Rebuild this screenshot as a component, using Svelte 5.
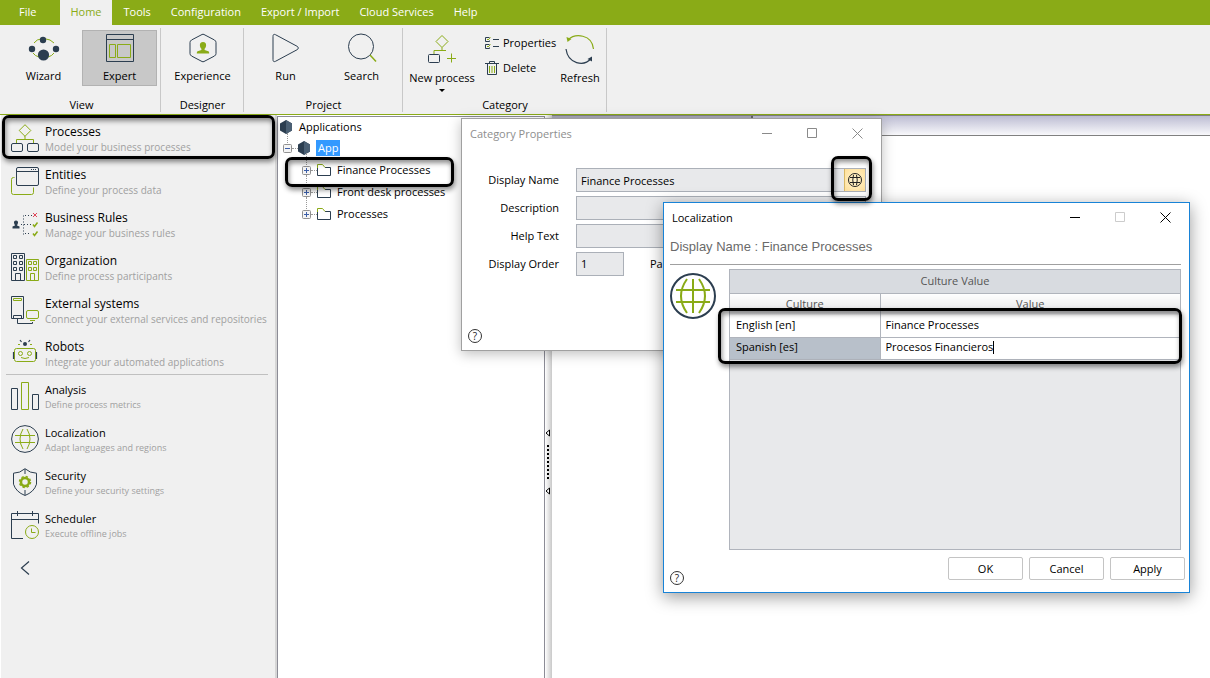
<script>
  const N = '#2c3e50';
  const G = '#8aab17';

  const tabs = ['File', 'Home', 'Tools', 'Configuration', 'Export / Import', 'Cloud Services', 'Help'];

  const icons = {
    wizard: `<g fill="none" stroke="${G}"><path d="M6 11q3-4 7-4M18 7q4 0 8 4M5 21q2 3 6 4M26 21q-2 3-6 4"/></g><g fill="${N}"><circle cx="15" cy="8" r="3.200"/><circle cx="4" cy="17" r="3.200"/><circle cx="28" cy="17" r="3.200"/><circle cx="15.500" cy="23" r="5.600"/></g>`,
    expert: `<g fill="none"><path stroke="${N}" d="M2.500 2.500h27v27h-27zM2.500 7.500h27"/><path stroke="${G}" d="M5.500 12.500h6v13h-6zM13.500 12.500h13v13h-13z"/></g>`,
    experience: `<path fill="none" stroke="${N}" d="M15 2.500q1-.6 2 0l10.500 5.500q1.500 1 1.500 2.500v11q0 1.500-1.500 2.500L17 29.500q-1 .6-2 0L4.500 24Q3 23 3 21.500v-11Q3 9 4.500 8z"/><path fill="${G}" d="M16 10c2.200 0 3.300 1.500 3.100 3.400-.1 1.500-.8 2.700-1.500 3.400v1.300l3.700 1.200c.7.300.9 1 .9 2.200H9.800c0-1.200.2-1.900.9-2.200l3.700-1.200v-1.300c-.7-.7-1.400-1.900-1.500-3.400C12.700 11.500 13.800 10 16 10z"/>`,
    run: `<path fill="none" stroke="${N}" d="M3 4.500q0-3 2.500-1.800L27.500 14.500q1.800 1.500 0 3L5.500 29.300Q3 30.500 3 27.500z"/>`,
    search: `<g fill="none"><circle cx="15" cy="14.500" r="12.500" stroke="${N}"/><path stroke="${G}" stroke-width="1.500" d="M24 23l6 6.500"/></g>`,
    newprocess: `<g fill="none"><path stroke="${G}" d="M16 1.500l6 6-6 6-6-6zM16 13.500v3.500M8 21v-4.500h12M25.500 19.500v9M21 24.500h9"/><rect x="2.500" y="20.500" width="11" height="8" rx="1" stroke="${N}"/></g>`,
    refresh: `<g fill="none" stroke-width="1.200"><path stroke="${G}" d="M4 6C11-1 28 0 29.500 15"/><path stroke="${N}" d="M2 15C4 30 20 33 27 24.500"/></g><path fill="${G}" d="M2.500 3l1 5 4-3z"/><path fill="${N}" d="M28 27.500v-5l-4.500 2.500z"/>`,
    processes: `<g fill="none"><path stroke="${G}" d="M14 .7l5.800 5.800L14 12.300 8.200 6.500zM14 12v3.500M5.500 19.500v-4h17v4"/><g stroke="${N}"><rect x=".5" y="19.500" width="11" height="8" rx="1.500"/><rect x="16.500" y="19.500" width="11" height="8" rx="1.500"/></g></g>`,
    entities: `<g fill="none"><path stroke="${G}" d="M3.500 10.500h-1q-2 0-2 2v13q0 2 2 2h18q2 0 2-2v-5"/><g stroke="${N}"><rect x="5.500" y=".5" width="22" height="18" rx="1.500"/><path d="M5.500 4.500h22"/><path stroke-dasharray="1 1" d="M20 2.500h6"/></g></g>`,
    rules: `<path fill="${N}" d="M5 10.500q2.300 0 2 2.500l-1 2.500 2.500 1v2H1.500v-2l2.500-1L3 13q-.3-2.500 2-2.500z"/><g fill="none"><path stroke="${N}" stroke-dasharray="1 2" d="M10 14.500h11M12.500 5.500v19M14 5.500h7M14 23.500h6"/><path stroke="#e0485a" d="M22 3l4 4M26 3l-4 4"/><path stroke="${G}" stroke-width="1.500" d="M22 14.500l1.500 2 3-4M22 23.500l1.500 2 3-4"/></g>`,
    organization: `<g fill="none" stroke="${N}"><path d="M.5.500h13v27H.5zM2.500 2.500h3v3h-3zM8.500 2.500h3v3h-3zM2.500 8.500h3v3h-3zM8.500 8.500h3v3h-3zM2.500 14.500h3v3h-3zM8.500 14.500h3v3h-3zM4.500 27v-6.500h5V27"/><path stroke="${G}" d="M15.500 6.500h12v21h-12zM17.500 8.500h3v3h-3zM22.500 8.500h3v3h-3zM17.500 14.500h3v3h-3zM22.500 14.500h3v3h-3zM19.500 27v-6.500h4V27"/></g>`,
    external: `<g fill="none" stroke="${N}"><path d="M.5.500h12v22H.5zM2.500 22v-2.500h8V22M6.500 23v4.500h15V26"/><path stroke="${G}" d="M2.500 2.500h8v2h-8z"/><rect x="15.500" y="14.500" width="12" height="8" rx="1.500" stroke="${G}"/><path stroke="${G}" d="M19 24.500h5"/></g>`,
    robots: `<g fill="none" stroke="${G}"><rect x="3.500" y="9.500" width="21" height="13" rx="2"/><circle cx="9.500" cy="14.500" r="2"/><circle cx="18.500" cy="14.500" r="2"/><path d="M10 18.500q4 2 8 0M9 5.500H7M19 5.500h2"/><path stroke="${N}" stroke-width="1.200" d="M2.500 13v7M25.500 13v7M9 1l1.500 2M19 1l-1.500 2"/></g><circle cx="14" cy="5" r="2" fill="${N}"/>`,
    analysis: `<g fill="none"><path stroke="${N}" d="M.5 6.500h6v21h-6zM21.500 12.500h6v15h-6z"/><path stroke="${G}" d="M10.500.500h7v27h-7z"/></g>`,
    localization: `<g fill="none"><circle cx="14" cy="14" r="13.400" stroke="${N}"/><path stroke="${G}" d="M4 10.500h20M4 17.500h20M12 4q-6 10 0 20M16 4q6 10 0 20"/></g>`,
    security: `<g fill="none"><path stroke="${N}" d="M14 .7q5 4.500 11.500 4.500v11Q23 24 14 27.500 5 24 2.500 16.200v-11Q9 5.200 14 .7zM14 1v5M14 22v5"/><circle cx="14" cy="14" r="4" stroke="${G}" stroke-width="2.500"/><circle cx="14" cy="14" r="5.500" stroke="${G}" stroke-width="1.500" stroke-dasharray="2.320 2"/></g>`,
    scheduler: `<g fill="none"><path stroke="${N}" d="M12 27.500H.5v-25h27v10M.5 8.500h27M6.500 0v5M21.500 0v5"/><circle cx="21" cy="21" r="6.500" stroke="${G}"/><path stroke="${G}" d="M20.500 17.500v4h4"/></g>`
  };

  const mainItems = [
    ['processes', 'Processes', 'Model your business processes'],
    ['entities', 'Entities', 'Define your process data'],
    ['rules', 'Business Rules', 'Manage your business rules'],
    ['organization', 'Organization', 'Define process participants'],
    ['external', 'External systems', 'Connect your external services and repositories'],
    ['robots', 'Robots', 'Integrate your automated applications']
  ];
  const extraItems = [
    ['analysis', 'Analysis', 'Define process metrics'],
    ['localization', 'Localization', 'Adapt languages and regions'],
    ['security', 'Security', 'Define your security settings'],
    ['scheduler', 'Scheduler', 'Execute offline jobs']
  ];
  const categories = ['Finance Processes', 'Front desk processes', 'Processes'];

  let displayName = $state('Finance Processes');
  let description = $state('');
  let helpText = $state('');
  let order = $state('1');
  let spanish = $state('Procesos Financieros');
</script>

{#snippet big(icon, label)}
  <svg width="32" height="32" viewBox="0 0 32 32" aria-hidden="true">{@html icons[icon]}</svg>
  <span>{label}</span>
{/snippet}

{#snippet entry(item)}
  <svg width="28" height="28" viewBox="0 0 28 28" aria-hidden="true">{@html icons[item[0]]}</svg>
  <span class="words"><span class="name">{item[1]}</span><span class="hint">{item[2]}</span></span>
{/snippet}

{#snippet hexagon()}
  <svg width="12" height="14" viewBox="0 0 12 14" aria-hidden="true">
    <path fill="#2c3e50" d="M6 0l6 3.500v7L6 14 0 10.500v-7z" /><path fill="#4a5f73" d="M6 0l6 3.500v7L6 14z" />
  </svg>
{/snippet}

{#snippet expander(open)}
  <svg width="9" height="9" viewBox="0 0 9 9" aria-hidden="true">
    <rect x=".5" y=".5" width="8" height="8" rx="1" fill="#f4f4f4" stroke="#919191" />
    <path stroke="#3b5ea8" d={open ? 'M2 4.500h5' : 'M2 4.500h5M4.500 2v5'} />
  </svg>
{/snippet}

{#snippet controls(dim)}
  <div class="controls">
    <button aria-label="Minimize"><svg width="11" height="11"><path stroke={dim ? '#8a8a8a' : '#000'} d="M0 5.500h10" /></svg></button>
    <button aria-label="Maximize"><svg width="11" height="11"><path fill="none" stroke={dim ? '#8a8a8a' : '#ccc'} d="M.5.500h9v9h-9z" /></svg></button>
    <button aria-label="Close"><svg width="11" height="11"><path stroke={dim ? '#8a8a8a' : '#000'} d="M.5.500l10 10M10.500.500l-10 10" /></svg></button>
  </div>
{/snippet}

{#snippet help()}
  <button class="help" aria-label="Help">?</button>
{/snippet}

<div class="app">
  <nav class="tabs">
    {#each tabs as tab}
      <button class:active={tab === 'Home'} class:file={tab === 'File'}>{tab}</button>
    {/each}
  </nav>

  <div class="ribbon">
    <section class="group view">
      <div class="tools">
        <button class="tool">{@render big('wizard', 'Wizard')}</button>
        <button class="tool on">{@render big('expert', 'Expert')}</button>
      </div>
      <h2>View</h2>
    </section>
    <section class="group">
      <div class="tools"><button class="tool">{@render big('experience', 'Experience')}</button></div>
      <h2>Designer</h2>
    </section>
    <section class="group">
      <div class="tools">
        <button class="tool">{@render big('run', 'Run')}</button>
        <button class="tool">{@render big('search', 'Search')}</button>
      </div>
      <h2>Project</h2>
    </section>
    <section class="group category">
      <div class="tools">
        <button class="tool low new">{@render big('newprocess', 'New process')}<i class="caret-down"></i></button>
        <div class="stack">
          <button>
            <svg width="14" height="12" viewBox="0 0 14 12" aria-hidden="true">
              <path fill="none" stroke="#2c3e50" d="M4.500.500h-4v4h4v-1M4.500 7.500h-4v4h4v-1M8 2.500h6M8 9.500h6" />
              <path fill="none" stroke="#8aab17" d="M2 2l1 1 2.500-2.500M2 9l1 1 2.500-2.500" />
            </svg>
            Properties
          </button>
          <button>
            <svg width="14" height="14" viewBox="0 0 14 14" aria-hidden="true">
              <path fill="none" stroke="#2c3e50" d="M0 2.500h14M4.500 2V.500h5V2M2.500 3v10.500h9V3" />
              <path stroke="#8aab17" d="M4.500 5v7M7 5v7M9.500 5v7" />
            </svg>
            Delete
          </button>
        </div>
        <button class="tool low slim">{@render big('refresh', 'Refresh')}</button>
      </div>
      <h2>Category</h2>
    </section>
  </div>

  <div class="body">
    <aside class="side">
      <ul class="main">
        {#each mainItems as item, i}
          <li class:marked={i === 0}><button>{@render entry(item)}</button></li>
        {/each}
      </ul>
      <hr />
      <ul class="extra">
        {#each extraItems as item}
          <li><button>{@render entry(item)}</button></li>
        {/each}
      </ul>
      <button class="back" aria-label="Collapse">
        <svg width="10" height="14" viewBox="0 0 10 14"><path fill="none" stroke="#2c3e50" stroke-width="1.200" d="M9 .5L1.500 7 9 13.500" /></svg>
      </button>
    </aside>

    <section class="tree">
      <div class="node root">{@render hexagon()}<span>Applications</span></div>
      <div class="node app-node">{@render expander(true)}<i class="dots"></i>{@render hexagon()}<span class="picked">App</span></div>
      <ul>
        {#each categories as category, i}
          <li class="node" class:marked={i === 0}>
            {@render expander(false)}<i class="dots"></i>
            <svg width="14" height="12" viewBox="0 0 14 12" aria-hidden="true">
              <path fill="none" stroke="#2c3e50" d="M.5 4v7.500h13v-8H8" />
              <path fill="none" stroke="#8aab17" d="M.5 4V.500h5L8 3.500" />
            </svg>
            <span>{category}</span>
          </li>
        {/each}
      </ul>
    </section>

    <div class="splitter">
      <svg width="6" height="8"><path d="M4.500 1v6L1 4z" fill="#fff" stroke="#000" /></svg>
      <i></i>
      <svg width="6" height="8"><path d="M4.500 1v6L1 4z" fill="#fff" stroke="#000" /></svg>
    </div>

    <main class="canvas"><div class="strip"><i></i></div></main>
  </div>

  <section class="window props">
    <header><h1>Category Properties</h1>{@render controls(true)}</header>
    <form>
      <label for="dn">Display Name</label>
      <div class="combo">
        <input id="dn" bind:value={displayName} />
        <button type="button" class="globe marked" aria-label="Localize">
          <svg width="16" height="16" viewBox="0 0 16 16">
            <g fill="none" stroke="#222"><circle cx="8" cy="8" r="6.500" /><path d="M3 5.500h10M3 10.500h10M6.500 3Q5 8 6.500 13M9.500 3q1.500 5 0 10" /></g>
          </svg>
        </button>
      </div>
      <label for="ds">Description</label>
      <input id="ds" bind:value={description} />
      <label for="ht">Help Text</label>
      <input id="ht" bind:value={helpText} />
      <label for="or">Display Order</label>
      <div class="pair"><input id="or" bind:value={order} /><span>Pa</span></div>
    </form>
    {@render help()}
  </section>

  <section class="window local">
    <header><h1>Localization</h1>{@render controls(false)}</header>
    <h2>Display Name : Finance Processes</h2>
    <div class="content">
      <svg width="48" height="48" viewBox="0 0 48 48" aria-hidden="true">
        <circle cx="24" cy="24" r="22" fill="none" stroke="#2c3e50" stroke-width="2" />
        <path fill="none" stroke="#8aab17" stroke-width="2" d="M7 18h34M7 30h34M24 7v34M18 7Q6 24 18 41M30 7q12 17 0 34" />
      </svg>
      <div class="grid">
        <table>
          <colgroup><col class="culture" /><col /></colgroup>
          <thead>
            <tr class="band"><th colspan="2">Culture Value</th></tr>
            <tr class="cols"><th>Culture</th><th>Value</th></tr>
          </thead>
          <tbody>
            <tr><td>English [en]</td><td>Finance Processes</td></tr>
            <tr><td class="sel">Spanish [es]</td><td><span class="edit"><input aria-label="Spanish value" bind:value={spanish} /><i></i></span></td></tr>
          </tbody>
        </table>
        <div class="mark"></div>
      </div>
    </div>
    <footer>
      {@render help()}
      <div class="actions"><button>OK</button><button>Cancel</button><button>Apply</button></div>
    </footer>
  </section>
</div>

<style>
  :global(body) { margin: 0; background: #fff; }
  * { box-sizing: border-box; }
  .app {
    position: relative; min-height: 100vh; display: flex; flex-direction: column; overflow: hidden;
    font: 11px/16px "Open Sans", "Noto Sans", sans-serif; color: #000;
  }
  button { font: inherit; color: inherit; border: 0; background: none; padding: 0; }
  h1, h2, ul, hr { margin: 0; padding: 0; font: inherit; list-style: none; }
  svg { display: block; flex: none; }

  .tabs { display: flex; height: 25px; background: #8aab17; }
  .tabs button { color: #fff; padding: 0 10px 2px; white-space: nowrap; }
  .tabs .file { padding: 0 24px 2px 19px; }
  .tabs .active { background: #f0f0f0; color: #8aab17; margin-right: 2px; }

  .ribbon { display: flex; height: 90px; padding: 3px 0 2px; background: #f0f0f0; border-bottom: 1px solid #8aab17; }
  .group { display: flex; flex-direction: column; justify-content: space-between; padding: 2px 3px 0 4px; border-right: 1px solid #c8c8c8; }
  .group.view { padding-left: 6px; }
  .group h2 { text-align: center; line-height: 14px; }
  .tools { display: flex; gap: 1px; }
  .tool { display: flex; flex-direction: column; align-items: center; width: 75px; height: 56px; padding-top: 2px; white-space: nowrap; }
  .tool span { margin-top: 4px; }
  .on { background: #c8c8c8; box-shadow: inset 0 0 0 1px #b2b2b2; }
  .low { padding-top: 4px; }
  .new { width: 70px; }
  .slim { width: 46px; }
  .caret-down { flex: none; margin-top: 3px; border: 3px solid transparent; border-top-color: #000; border-bottom: 0; }
  .stack { display: flex; flex-direction: column; gap: 9px; padding: 5px 0 0 7px; width: 78px; }
  .stack button { display: flex; align-items: center; gap: 4px; white-space: nowrap; }

  .body { flex: 1; display: flex; }
  .side { width: 277px; flex: none; padding-top: 2px; background: #f0f0f0; border-left: 1px solid #fff; box-shadow: inset -2px 0 #d6d6d6; }
  .side li { position: relative; }
  .side li button { display: flex; gap: 6px; width: 100%; padding: 7px 0 4px 10px; text-align: left; }
  .side .main { display: flex; flex-direction: column; gap: 1px; }
  .words { display: flex; flex-direction: column; white-space: nowrap; }
  .name { font-size: 12px; }
  .hint { color: #a0a0a0; font-size: 10px; line-height: 15px; }
  .side hr { border: 0; border-top: 1px solid #c0c0c0; margin: 0 9px 0 5px; }
  .side .extra button { padding: 7px 0 6px 10px; }
  .extra .name { font-size: 11px; }
  .extra .hint { font-size: 9px; line-height: 14px; }
  .back { display: block; padding: 14px 19px; }

  .marked { position: relative; }
  .marked::after, .mark {
    content: ""; position: absolute; border: 3px solid #000; border-radius: 7px; pointer-events: none; z-index: 1;
    box-shadow: 1px 3px 5px rgba(0, 0, 0, .45), inset 1px 3px 5px rgba(0, 0, 0, .45);
  }
  .side .marked::after { inset: -2px 2px 0 1px; }

  .tree { width: 268px; flex: none; padding-left: 2px; margin-top: 1px; border: 1px solid #8c8c96; border-bottom: 0; background: #fff; }
  .node { display: flex; align-items: center; height: 22px; white-space: nowrap; }
  .root { height: 20px; }
  .root span { margin-left: 7px; }
  .app-node { position: relative; padding-left: 3px; }
  .app-node::before { content: ""; position: absolute; left: 7px; top: -4px; height: 10px; border-left: 1px dotted #999; }
  .dots { width: 6px; border-top: 1px dotted #999; }
  .picked { margin-left: 6px; padding: 0 2px; background: #39f; color: #fff; }
  .tree ul { padding-left: 22px; }
  .tree li { position: relative; }
  .tree li::before { content: ""; position: absolute; left: 4px; top: -6px; height: 12px; border-left: 1px dotted #999; }
  .tree li span { margin-left: 6px; }
  .tree .marked::after { inset: -2px 90px -6px -17px; }

  .splitter {
    width: 7px; flex: none; display: flex; flex-direction: column; align-items: center; gap: 8px; padding: 314px 2px 0 0;
    background: linear-gradient(90deg, #fff, #c9c9c9);
  }
  .splitter i { width: 2px; height: 34px; background: repeating-linear-gradient(#000 0 2px, transparent 2px 4px); }
  .canvas { flex: 1; background: #fff; }
  .strip { height: 21px; border-top: 1px solid #808080; border-bottom: 1px solid #808080; background: linear-gradient(#bdbdd3, #f8f8fb); }
  .strip i { display: block; width: 201px; height: 3px; border-right: 2px solid #666; background: #a8a8b8; }

  .window { position: absolute; display: flex; flex-direction: column; background: #fff; }
  .window header { display: flex; justify-content: space-between; height: 30px; padding: 0 1px 0 8px; line-height: 30px; }
  .controls { display: flex; height: 28px; }
  .controls button { width: 45px; display: flex; justify-content: center; align-items: center; }
  .props { left: 461px; top: 118px; width: 421px; height: 233px; border: 1px solid #a0a0a0; box-shadow: 0 3px 12px rgba(0, 0, 0, .25); }
  .props header { color: #8e8e8e; }
  form { display: grid; grid-template-columns: 97px 1fr; column-gap: 17px; row-gap: 4px; padding: 19px 15px 0 0; }
  form label { text-align: right; line-height: 24px; }
  form input { width: 100%; height: 24px; padding: 0 4px; border: 1px solid #abb0b8; border-radius: 0; background: #e8e9eb; font: inherit; }
  .combo { display: flex; border: 1px solid #abb0b8; background: #e8e9eb; }
  .combo input { flex: 1; height: 22px; border: 0; }
  .globe { width: 21px; display: flex; justify-content: center; align-items: center; background: radial-gradient(#fff3cf, #ffe09a); border-left: 1px solid #d9b865; }
  .globe.marked::after { inset: -13px -7px -10px -14px; }
  .pair { display: flex; gap: 26px; line-height: 24px; }
  .pair input { width: 48px; }
  .help { width: 14px; height: 14px; border: 1px solid #333; border-radius: 50%; line-height: 12px; font-size: 10px; color: #222; }
  .props > .help { margin: auto 0 7px 6px; }

  .local { left: 663px; top: 202px; width: 527px; height: 391px; border: 1px solid #1883d7; box-shadow: 0 4px 16px rgba(0, 0, 0, .4); }
  .local h2 { margin: 0 8px 0 6px; padding: 3px 0 6px; font: 13px/22px "Liberation Sans", Arial, sans-serif; color: #6a6a6a; border-bottom: 1px solid #a0a0a0; }
  .content { flex: 1; display: flex; gap: 12px; padding: 4px 8px 0 5px; }
  .content > svg { margin-top: 3px; }
  .grid { position: relative; flex: 1; background: #e8e9eb; border: 1px solid #b0b4bc; }
  table { width: 100%; border-collapse: collapse; table-layout: fixed; }
  .culture { width: 150px; }
  th { font-weight: 400; color: #555; padding: 0; }
  .band th { height: 23px; background: #d8dbe0; border-bottom: 1px solid #b0b4bc; }
  .cols th { height: 22px; background: linear-gradient(#fff, #e4e4e6); }
  td { height: 22px; padding: 0 5px 2px; line-height: 16px; background: #fff; border-bottom: 1px solid #b0b4bc; }
  .cols th + th, td + td { border-left: 1px solid #b0b4bc; }
  td:first-child { padding-left: 6px; }
  td.sel { background: #b8c0ca; }
  .edit { display: flex; align-items: center; }
  .edit input { field-sizing: content; padding: 0; border: 0; height: 16px; background: none; font: inherit; }
  .edit i { width: 1px; height: 13px; background: #000; }
  .mark { inset: 38px -2px auto -12px; height: 56px; }
  footer { display: flex; justify-content: space-between; height: 42px; padding: 7px 4px 0 6px; }
  footer .help { margin-top: 14px; }
  .actions { display: flex; gap: 6px; }
  .actions button { width: 75px; height: 23px; border: 1px solid #c4c4c4; border-radius: 2px; background: #fff; }
</style>
